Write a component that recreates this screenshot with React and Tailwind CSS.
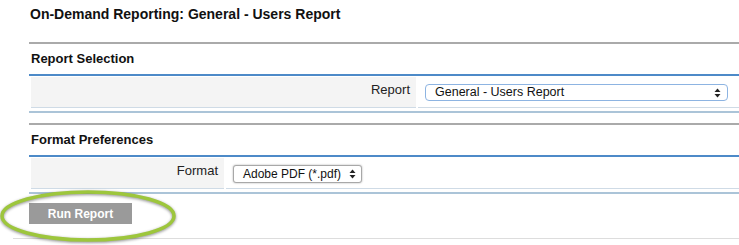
import React from "react";

function Arrows() {
  return (
    <svg width="7" height="10" viewBox="0 0 7 10" className="shrink-0">
      <path d="M3.5 0.5 L6.5 4 L0.5 4 Z" fill="#222" />
      <path d="M3.5 9.5 L6.5 6 L0.5 6 Z" fill="#222" />
    </svg>
  );
}

function Section({ title, label, labelWidth, children }) {
  return (
    <div>
      <div className="border-t-2 border-[#aaaaaa] h-[34px] flex items-center pl-[2px] border-b-2 border-b-[#4d8ac8]">
        <span className="font-bold text-[13px] text-[#111]">{title}</span>
      </div>
      <div className="flex pl-[2px] pt-[1px] gap-[2px]">
        <div
          className="h-[31px] bg-[#f4f4f4] border-b border-[#cfdbe6] flex justify-end items-start pt-[5px] pr-[6px] text-[13px] leading-[16px] text-[#222]"
          style={{ width: labelWidth }}
        >
          {label}
        </div>
        <div className="flex-1 h-[31px] border-b border-[#cfdbe6] flex items-center pl-[7px] pr-[11px]">
          {children}
        </div>
      </div>
      <div className="mt-[3px] h-[2px] bg-[#abc4d8]" />
    </div>
  );
}

export default function App() {
  return (
    <div
      className="relative w-[739px] h-[245px] bg-white overflow-hidden"
      style={{ fontFamily: '"Liberation Sans", Arial, sans-serif' }}
    >
      <div className="pl-[29px]">
        <div className="h-[42px] pt-[6px] pl-[1px]">
          <h1 className="font-bold text-[14px] leading-[17px] text-[#111]">
            On-Demand Reporting: General - Users Report
          </h1>
        </div>

        <Section title="Report Selection" label="Report" labelWidth="385px">
          <div className="w-full h-[17px] mt-[1px] rounded-[4px] border border-[#8db4e2] bg-white flex items-center justify-between pl-[9px] pr-[6px] text-[12.5px] text-[#111] whitespace-nowrap">
            <span>General - Users Report</span>
            <Arrows />
          </div>
        </Section>

        <div className="h-[10px]" />

        <Section title="Format Preferences" label="Format" labelWidth="193px">
          <div className="w-[129px] h-[18px] mt-[1px] rounded-[3px] border border-[#a8a8a8] shadow-[0_0_2px_rgba(0,0,0,0.35)] bg-white flex items-center justify-between pl-[9px] pr-[5px] text-[12px] text-[#111] whitespace-nowrap">
            <span>Adobe PDF (*.pdf)</span>
            <Arrows />
          </div>
        </Section>

        <div className="pt-[9px]">
          <button className="w-[103px] h-[21px] bg-[#9a9a9a] text-white font-bold text-[12px] flex items-center justify-center">
            Run Report
          </button>
        </div>
      </div>

      <div className="ml-[13px] mt-[14px] h-px bg-[#dddddd]" />

      <svg
        className="absolute left-0 top-[189px]"
        width="182"
        height="57"
        viewBox="0 0 182 57"
        style={{ filter: "drop-shadow(0 1px 1.5px rgba(0,0,0,0.45))" }}
      >
        <ellipse cx="88" cy="27" rx="86" ry="24" fill="none" stroke="#9dc63c" strokeWidth="3.5" />
      </svg>
    </div>
  );
}
